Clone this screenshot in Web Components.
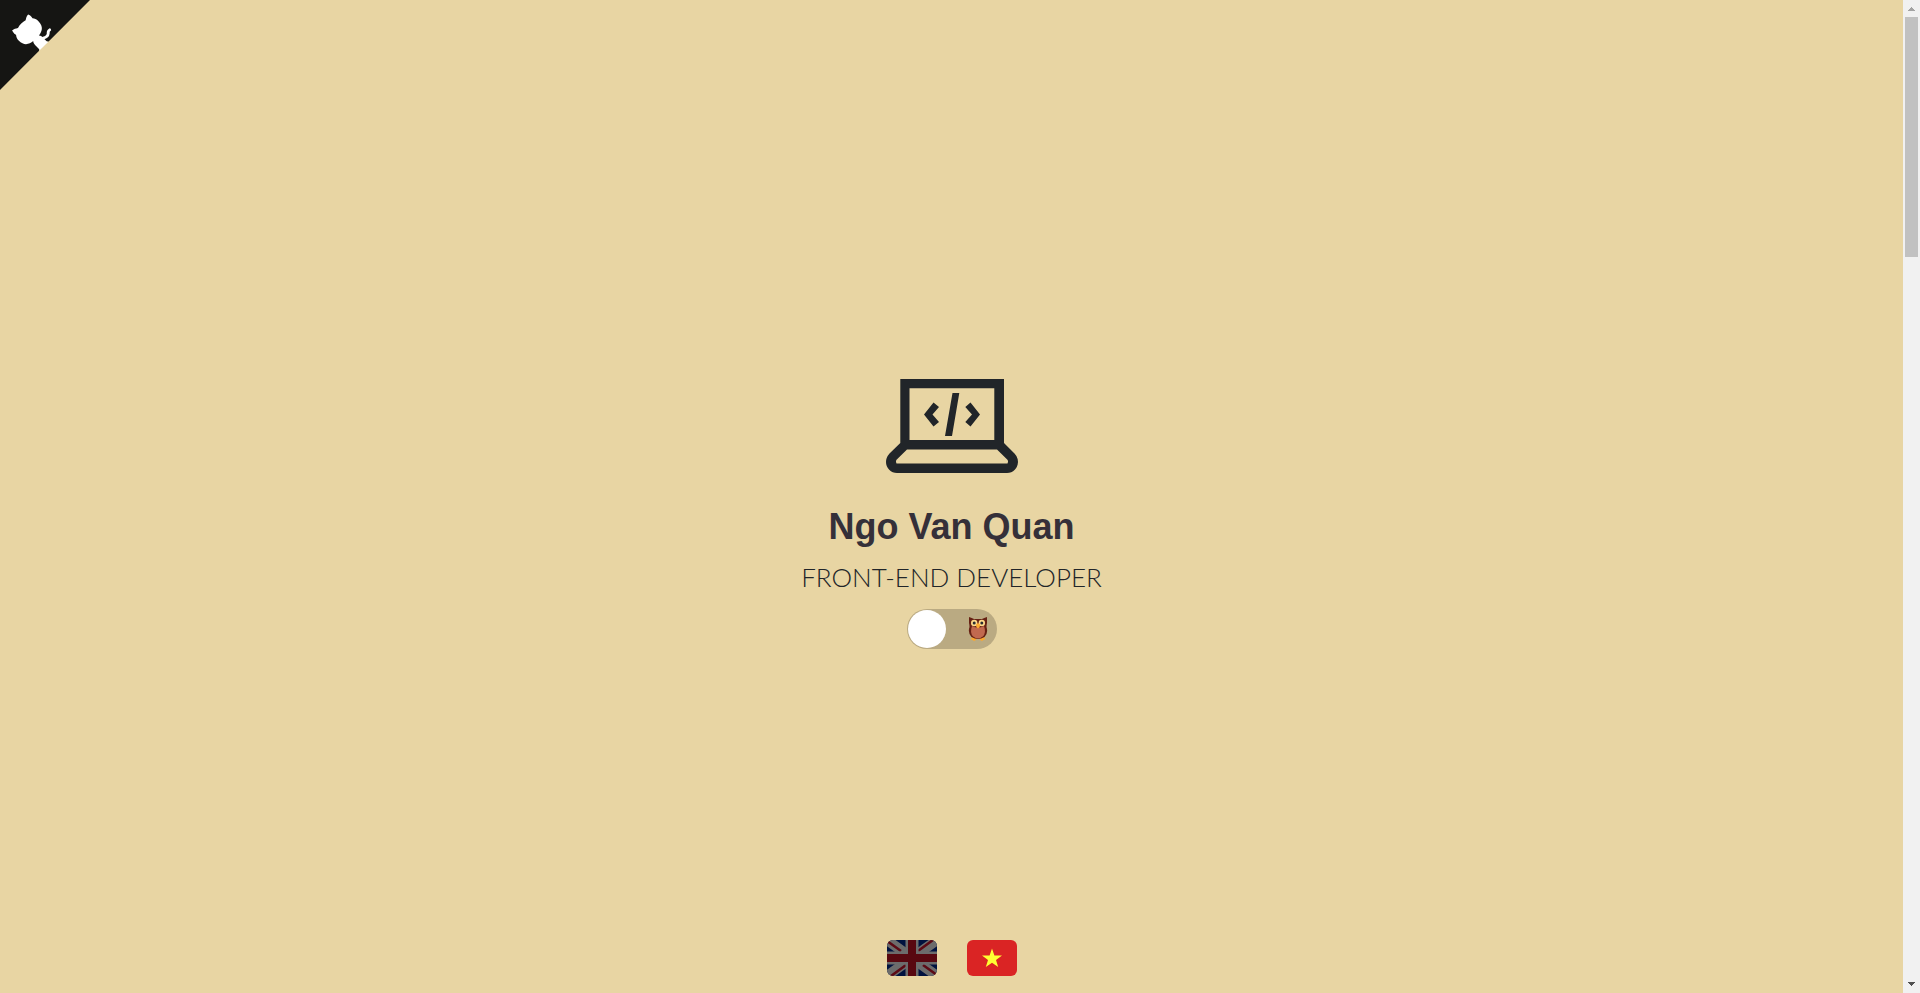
<!DOCTYPE html>
<html lang="en">
<head>
<meta charset="utf-8">
<title>Ngo Van Quan</title>
<style>
html, body { height: 100%; margin: 0; }
body { background: #e8d5a3; font-family: "Lato", "Liberation Sans", sans-serif; color: #212529; }
</style>
</head>
<body>
<portfolio-page></portfolio-page>
<script>
function define(name, html) {
  const template = document.createElement('template');
  template.innerHTML = html;
  customElements.define(name, class extends HTMLElement {
    constructor() {
      super();
      this.attachShadow({ mode: 'open' }).append(template.content.cloneNode(true));
    }
  });
}

define('github-corner', `
<style>
:host { display: block; position: absolute; top: 0; left: 0; width: 90px; height: 90px; }
a, svg { display: block; }
svg { width: 90px; height: 90px; fill: #151513; color: #fff; }
</style>
<a href="#github" aria-label="View source on GitHub">
<svg viewBox="0 0 250 250" aria-hidden="true"><g transform="translate(250 0) scale(-1 1)">
<path d="M0,0 L115,115 L130,115 L142,142 L250,250 L250,0 Z"/>
<path fill="none" stroke="currentColor" stroke-width="8" stroke-linecap="round" stroke-linejoin="round" d="M112 83Q117 86 116 93Q117 103 130 106"/>
<path fill="currentColor" d="M115.0,115.0 C114.9,115.1 118.7,116.5 119.8,115.4 L133.7,101.6 C136.9,99.2 139.9,98.4 142.2,98.6 C133.8,88.0 127.5,74.4 143.8,58.0 C148.5,53.4 154.0,51.2 159.7,51.0 C160.3,49.4 163.2,43.6 171.4,40.1 C171.4,40.1 176.1,42.5 178.8,56.2 C183.1,58.6 187.2,61.8 190.9,65.4 C194.5,69.0 197.7,73.2 200.1,77.6 C213.8,80.2 216.3,84.9 216.3,84.9 C212.7,93.1 206.9,96.0 205.4,96.6 C205.1,102.4 203.0,107.8 198.3,112.5 C181.9,128.9 168.3,122.5 157.7,114.1 C157.9,116.9 156.7,120.9 152.7,124.9 L141.0,136.5 C139.8,137.7 141.6,141.9 141.8,141.8 Z"/>
</g></svg></a>`);

define('laptop-icon', `
<style>:host, svg { display: block; } svg { width: 132px; height: 94px; fill: currentColor; }</style>
<svg viewBox="0 0 132 94" aria-hidden="true">
<path fill-rule="evenodd" d="M14.3 0H118V64L128.500 74.500Q132 78.500 132 83A11 11 0 0 1 121 94H11A11 11 0 0 1 0 83Q0 78.500 3.500 74.500L14.300 64ZM23.500 9.300V61H108.300V9.300ZM21 70.500L10.300 81Q9.500 82.500 10.500 84.500H121.500Q122.500 82.500 121.700 81L111 70.500Z"/>
<path d="M47.500 23.500L53 28L46.500 35.500L53 43L47.500 47.500L38 35.500ZM84.500 23.500L79.300 28L86 35.500L79.300 43L84.500 47.500L94 35.500ZM66.500 14H73.300L66 57H59Z"/>
</svg>`);

define('theme-switch', `
<style>
:host { display: block; }
label { display: flex; align-items: center; justify-content: space-between; box-sizing: border-box; width: 90px; height: 40px; padding: 0 9px 0 1px; border-radius: 20px; background: #baaa82; }
input { appearance: none; width: 38px; height: 38px; margin: 0; border-radius: 50%; background: #fff; }
svg { width: 20px; height: 26px; }
</style>
<label><input type="checkbox" role="switch" aria-label="Dark theme">
<svg viewBox="0 0 20 26" aria-hidden="true">
<path fill="#f9a732" d="M2.500 23L5 20.500H8.500L8 24L6 25L4.500 24ZM17.500 23L15 20.500H11.500L12 24L14 25L15.500 24Z"/>
<path fill="#662113" d="M1 1Q4 2 6 3H14Q16 2 19 1V7Q18.500 9 18.500 11Q20.500 17 16.500 21Q10 25 3.500 21Q-.5 17 1.500 11Q1.500 9 1 7Z"/>
<path fill="#c1694f" d="M4 10Q10 13 16 10Q18.500 17 14.800 20.500Q10 24.500 5.200 20.500Q1.500 17 4 10Z"/>
<circle cx="6.200" cy="7" r="3.200" fill="#ffd98a"/><circle cx="13.800" cy="7" r="3.200" fill="#ffd98a"/>
<circle cx="6.200" cy="7" r="1.500" fill="#292f33"/><circle cx="13.800" cy="7" r="1.500" fill="#292f33"/>
<path fill="#ffac33" d="M10 12.500Q7.500 10.500 8 8.500L10 7L12 8.500Q12.500 10.500 10 12.500Z"/>
</svg></label>`);

define('language-picker', `
<style>
:host { display: flex; gap: 30px; }
button { display: block; width: 50px; height: 36px; padding: 0; border: 0; border-radius: 6px; overflow: hidden; background: none; }
svg { display: block; width: 50px; height: 36px; }
.inactive { filter: brightness(.5); }
</style>
<button class="inactive" type="button" aria-label="English"><svg viewBox="0 0 50 36" aria-hidden="true">
<path fill="#00247d" d="M0 0H50V36H0Z"/>
<path stroke="#d8d8d8" stroke-width="10" d="M0 0L50 36M50 0L0 36"/>
<path stroke="#b81428" stroke-width="2.600" d="M0 1L14 11M36 25L50 35M46 0L31 11M19 25L4 36"/>
<path stroke="#d8d8d8" stroke-width="13" d="M25 0V36M0 18H50"/>
<path stroke="#b01020" stroke-width="8" d="M25 0V36M0 18H50"/>
</svg></button>
<button type="button" aria-label="Tiếng Việt"><svg viewBox="0 0 50 36" aria-hidden="true">
<path fill="#da2424" d="M0 0H50V36H0Z"/>
<path fill="#ff3" d="M25 8.500L27.400 15.600H35L29 20L31.200 27L25 22.800L18.800 27L21 20L15 15.600H22.600Z"/>
</svg></button>`);

define('profile-hero', `
<style>
:host { display: flex; flex-direction: column; align-items: center; text-align: center; }
h1 { margin: 32px 0 0; font: bold 36px/44px "Liberation Sans", Arial, sans-serif; color: #353039; }
p { margin: 12px 0 16px; font: 300 26px/32px Lato, sans-serif; }
</style>
<laptop-icon></laptop-icon>
<h1><slot name="name"></slot></h1>
<p><slot name="role"></slot></p>
<theme-switch></theme-switch>`);

define('page-scrollbar', `
<style>
:host { display: flex; flex-direction: column; align-items: center; justify-content: space-between; width: 17px; background: #f1f1f1; }
svg { display: block; width: 17px; height: 17px; flex: none; }
.track { flex: 1; width: 13px; }
.thumb { height: 25%; background: #c1c1c1; }
</style>
<svg viewBox="0 0 17 17" aria-hidden="true" shape-rendering="crispEdges"><path fill="#a3a3a3" d="M5 11V10H6V9H7V8H8V7H9V8H10V9H11V10H12V11Z"/></svg>
<div class="track"><div class="thumb"></div></div>
<svg viewBox="0 0 17 17" aria-hidden="true" shape-rendering="crispEdges"><path fill="#505050" d="M5 6V7H6V8H7V9H8V10H9V9H10V8H11V7H12V6Z"/></svg>`);

define('portfolio-page', `
<style>
:host { display: flex; height: 100%; }
main { flex: 1; display: grid; grid-template-rows: 1fr auto; justify-items: center; align-items: center; padding: 88px 0 17px; box-sizing: border-box; }
</style>
<main>
<github-corner></github-corner>
<profile-hero><span slot="name">Ngo Van Quan</span><span slot="role">FRONT-END DEVELOPER</span></profile-hero>
<language-picker></language-picker>
</main>
<page-scrollbar></page-scrollbar>`);
</script>
</body>
</html>
